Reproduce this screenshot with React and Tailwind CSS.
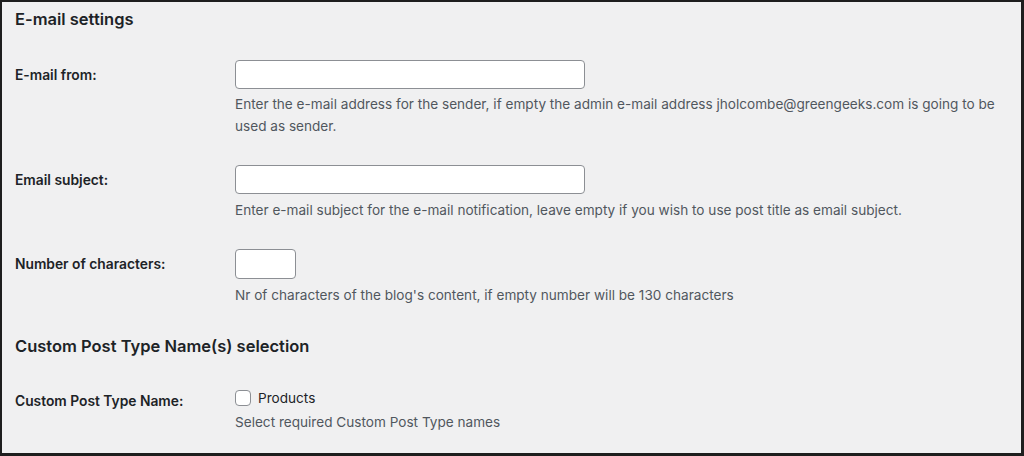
export default function App() {
  const font = { fontFamily: 'Inter, "Liberation Sans", sans-serif' };
  return (
    <div
      className="w-[1024px] h-[456px] bg-[#f0f0f1] border-l-2 border-t-2 border-r-[3px] border-b-[3px] border-[#1e1e1e] pl-[13px] text-[#1d2327] overflow-hidden"
      style={font}
    >
      <h2 className="mt-[5px] text-[16.5px] leading-6 font-semibold">E-mail settings</h2>

      <div className="mt-[29px] flex">
        <div className="w-[220px] shrink-0 pt-[5px] text-[13.8px] leading-5 font-semibold">E-mail from:</div>
        <div>
          <input type="text" className="block w-[350px] h-[29px] bg-white border border-[#8c8f94] rounded-[4px]" />
          <p className="mt-[4px] text-[13.6px] leading-[22px] text-[#50575e] w-[780px]">
            Enter the e-mail address for the sender, if empty the admin e-mail address jholcombe@greengeeks.com is going to be used as sender.
          </p>
        </div>
      </div>

      <div className="mt-[28px] flex">
        <div className="w-[220px] shrink-0 pt-[5px] text-[13.8px] leading-5 font-semibold">Email subject:</div>
        <div>
          <input type="text" className="block w-[350px] h-[29px] bg-white border border-[#8c8f94] rounded-[4px]" />
          <p className="mt-[5px] text-[13.6px] leading-[22px] text-[#50575e]">
            Enter e-mail subject for the e-mail notification, leave empty if you wish to use post title as email subject.
          </p>
        </div>
      </div>

      <div className="mt-[28px] flex">
        <div className="w-[220px] shrink-0 pt-[5px] text-[13.8px] leading-5 font-semibold">Number of characters:</div>
        <div>
          <input type="text" className="block w-[61px] h-[30px] bg-white border border-[#8c8f94] rounded-[4px]" />
          <p className="mt-[5px] text-[13.6px] leading-[22px] text-[#50575e]">
            Nr of characters of the blog's content, if empty number will be 130 characters
          </p>
        </div>
      </div>

      <h2 className="mt-[28px] text-[16.5px] leading-6 font-semibold">Custom Post Type Name(s) selection</h2>

      <div className="mt-[29px] flex">
        <div className="w-[220px] shrink-0 pt-[4px] text-[13.8px] leading-5 font-semibold">Custom Post Type Name:</div>
        <div>
          <label className="flex items-center gap-[7px] text-[13.6px] leading-[22px]">
            <span className="block w-4 h-4 bg-white border border-[#8c8f94] rounded-[4px]" />
            <span>Products</span>
          </label>
          <p className="mt-[2px] text-[13.6px] leading-[22px] text-[#50575e]">Select required Custom Post Type names</p>
        </div>
      </div>
    </div>
  );
}
